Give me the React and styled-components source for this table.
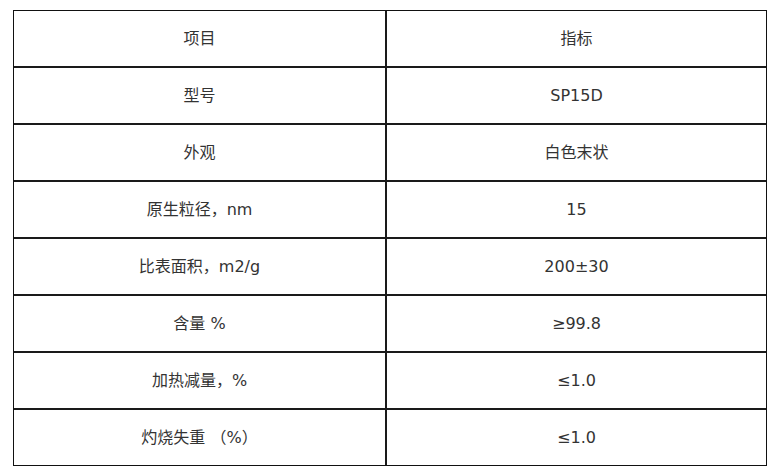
import React from "react";
import styled, { createGlobalStyle } from "styled-components";

const Global = createGlobalStyle`
  html, body { margin: 0; padding: 0; background: #fff; }
  body {
    font-family: "DejaVu Sans", "Noto Sans CJK SC", sans-serif;
    color: #333;
  }
`;

const Page = styled.div`
  padding: 10px 0 0 13px;
`;

const Table = styled.div`
  width: 754px;
  box-sizing: border-box;
  border: 1px solid #111;
  display: flex;
  flex-direction: column;
`;

const Row = styled.div`
  display: grid;
  grid-template-columns: 371px 1fr;
  height: 55px;
  border-top: ${(p) => (p.$first ? "none" : "2px solid #1a1a1a")};
`;

const Cell = styled.div`
  display: flex;
  align-items: center;
  justify-content: center;
  font-size: 16px;
  line-height: 1;
  white-space: pre;
  padding-top: 1px;
  border-left: ${(p) => (p.$right ? "2px solid #1a1a1a" : "none")};
`;

const rows = [
  ["项目", "指标"],
  ["型号", "SP15D"],
  ["外观", "白色末状"],
  ["原生粒径，nm", "15"],
  ["比表面积，m2/g", "200±30"],
  ["含量 %", "≥99.8"],
  ["加热减量，%", "≤1.0"],
  ["灼烧失重 （%）", "≤1.0"],
];

export default function App() {
  return (
    <Page>
      <Global />
      <Table>
        {rows.map(([a, b], i) => (
          <Row key={i} $first={i === 0}>
            <Cell>{a}</Cell>
            <Cell $right>{b}</Cell>
          </Row>
        ))}
      </Table>
    </Page>
  );
}
